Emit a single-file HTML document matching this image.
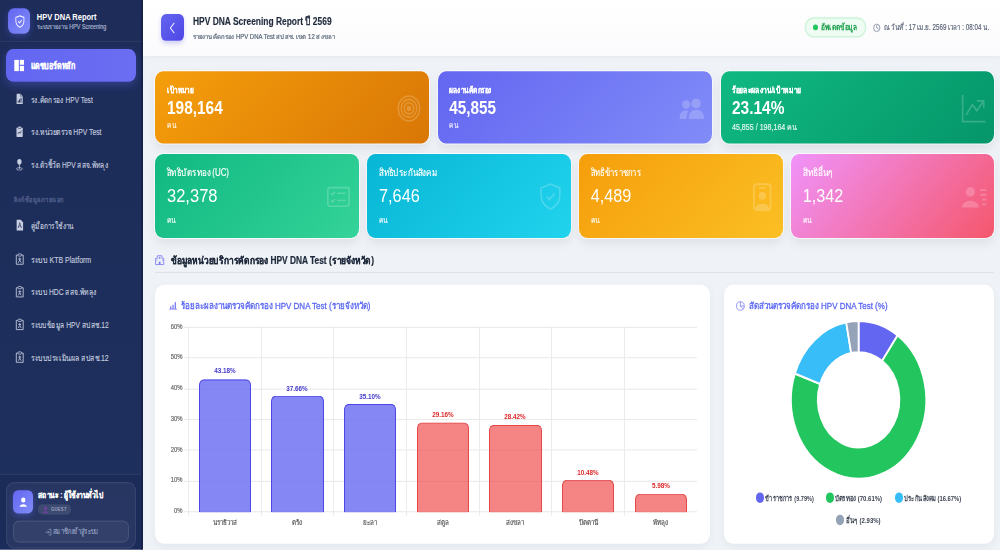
<!DOCTYPE html>
<html><head><meta charset="utf-8"><style>
html,body{margin:0;padding:0;width:1000px;height:550px;overflow:hidden;background:#eff2f7;}
#root{position:absolute;left:0;top:0;width:1000px;height:471.294px;transform:scaleY(1.167);transform-origin:0 0;font-family:'Liberation Sans',sans-serif;}
.t{position:absolute;white-space:nowrap;line-height:1;}
</style></head><body><div id="root">
<div style="position:absolute;left:0.00px;top:0.00px;width:142.00px;height:471.29px;background:linear-gradient(180deg,#1d2c59 0%,#1e305e 100%);"></div>
<div style="position:absolute;left:140.50px;top:0.00px;width:2.00px;height:471.29px;background:#16224a;"></div>
<div style="position:absolute;left:0.00px;top:35.13px;width:140.50px;height:0.86px;background:rgba(255,255,255,0.06);"></div>
<div style="position:absolute;left:8.20px;top:7.28px;width:21.90px;height:21.85px;border-radius:6px;background:linear-gradient(135deg,#6366f1,#818cf8);box-shadow:0 2px 6px rgba(99,102,241,0.35);"></div>
<svg style="position:absolute;left:14.60px;top:13.02px;width:9.80px;height:10.97px;overflow:visible;" viewBox="0 0 16 16" preserveAspectRatio="none"><path d="M8 0.8 C10 1.6 12.2 2.3 14.6 2.6 V7.2 C14.6 11 11.8 13.6 8 15.2 C4.2 13.6 1.4 11 1.4 7.2 V2.6 C3.8 2.3 6 1.6 8 0.8 Z" fill="none" stroke="#fff" stroke-width="1.3" stroke-linejoin="round"/><path d="M5.6 8.1 L7.3 9.7 L10.5 6.4" fill="none" stroke="#fff" stroke-width="1.3" stroke-linecap="round" stroke-linejoin="round"/></svg>
<div style="position:absolute;left:6.20px;top:42.33px;width:129.80px;height:27.34px;border-radius:7px;background:linear-gradient(90deg,#6366f1,#6b6ef2);box-shadow:0 3px 8px rgba(99,102,241,0.35);"></div>
<svg style="position:absolute;left:14.00px;top:51.41px;width:10.30px;height:10.28px;overflow:visible;" viewBox="0 0 16 16" preserveAspectRatio="none"><rect x="0.5" y="0.5" width="7" height="15" fill="#fff"/><rect x="9" y="0.5" width="6.5" height="6.5" fill="#fff"/><rect x="9" y="8.5" width="6.5" height="7" fill="#fff"/></svg>
<svg style="position:absolute;left:15.90px;top:79.78px;width:7.20px;height:9.43px;overflow:visible;" viewBox="0 0 12 16" preserveAspectRatio="none"><path d="M1 0.6 H7.6 L11.2 4.2 V15.4 H1 Z" fill="#c8cfe2"/><path d="M7.6 0.6 V4.2 H11.2" fill="none" stroke="#1e2d5b" stroke-width="0.7"/><rect x="3" y="10.5" width="1.5" height="3" fill="#1e2d5b"/><rect x="5.3" y="8.5" width="1.5" height="5" fill="#1e2d5b"/><rect x="7.6" y="6.5" width="1.5" height="7" fill="#1e2d5b"/></svg>
<svg style="position:absolute;left:15.90px;top:107.88px;width:7.20px;height:9.60px;overflow:visible;" viewBox="0 0 12 16" preserveAspectRatio="none"><rect x="0.8" y="2" width="10.4" height="13.6" rx="1" fill="#c8cfe2"/><rect x="3.5" y="0.4" width="5" height="3.2" rx="0.8" fill="#c8cfe2" stroke="#1e2d5b" stroke-width="0.8"/><path d="M3 11.5 L5 8.5 L7 10.5 L9 6.5" fill="none" stroke="#1e2d5b" stroke-width="1"/></svg>
<svg style="position:absolute;left:15.90px;top:136.08px;width:6.80px;height:9.94px;overflow:visible;" viewBox="0 0 12 16" preserveAspectRatio="none"><circle cx="6" cy="4.3" r="3.9" fill="#c8cfe2"/><rect x="5.35" y="7.5" width="1.3" height="6.5" fill="#c8cfe2"/><ellipse cx="6" cy="14" rx="5.2" ry="1.7" fill="none" stroke="#c8cfe2" stroke-width="1.1"/></svg>
<svg style="position:absolute;left:15.50px;top:188.35px;width:7.60px;height:9.85px;overflow:visible;" viewBox="0 0 12 16" preserveAspectRatio="none"><path d="M1 0.6 H7.6 L11.2 4.2 V15.4 H1 Z" fill="#c8cfe2"/><path d="M6 4.5 C5 7 5 9 3.2 12.2 M6 4.5 C7 7 7 9 8.8 12.2 M3.5 10 C5 9 7 9 8.5 10" fill="none" stroke="#1e2d5b" stroke-width="0.9"/></svg>
<svg style="position:absolute;left:14.70px;top:216.97px;width:9.50px;height:9.94px;overflow:visible;" viewBox="0 0 16 16" preserveAspectRatio="none"><path d="M4.5 2.5 H2.2 V15.2 H13.8 V2.5 H11.5" fill="none" stroke="#c8cfe2" stroke-width="1.3" stroke-linejoin="round"/><rect x="5" y="0.9" width="6" height="3" rx="1" fill="none" stroke="#c8cfe2" stroke-width="1.2"/><path d="M8 6 V9.5 L5.5 13 M8 9.5 L10.5 13 M5.5 8 H10.5" fill="none" stroke="#c8cfe2" stroke-width="1.2"/></svg>
<svg style="position:absolute;left:14.70px;top:244.82px;width:9.50px;height:9.94px;overflow:visible;" viewBox="0 0 16 16" preserveAspectRatio="none"><path d="M4.5 2.5 H2.2 V15.2 H13.8 V2.5 H11.5" fill="none" stroke="#c8cfe2" stroke-width="1.3" stroke-linejoin="round"/><rect x="5" y="0.9" width="6" height="3" rx="1" fill="none" stroke="#c8cfe2" stroke-width="1.2"/><path d="M8 6 V9.5 L5.5 13 M8 9.5 L10.5 13 M5.5 8 H10.5" fill="none" stroke="#c8cfe2" stroke-width="1.2"/></svg>
<svg style="position:absolute;left:14.70px;top:272.92px;width:9.50px;height:9.94px;overflow:visible;" viewBox="0 0 16 16" preserveAspectRatio="none"><path d="M4.5 2.5 H2.2 V15.2 H13.8 V2.5 H11.5" fill="none" stroke="#c8cfe2" stroke-width="1.3" stroke-linejoin="round"/><rect x="5" y="0.9" width="6" height="3" rx="1" fill="none" stroke="#c8cfe2" stroke-width="1.2"/><path d="M8 6 V9.5 L5.5 13 M8 9.5 L10.5 13 M5.5 8 H10.5" fill="none" stroke="#c8cfe2" stroke-width="1.2"/></svg>
<svg style="position:absolute;left:14.70px;top:300.94px;width:9.50px;height:9.94px;overflow:visible;" viewBox="0 0 16 16" preserveAspectRatio="none"><path d="M4.5 2.5 H2.2 V15.2 H13.8 V2.5 H11.5" fill="none" stroke="#c8cfe2" stroke-width="1.3" stroke-linejoin="round"/><rect x="5" y="0.9" width="6" height="3" rx="1" fill="none" stroke="#c8cfe2" stroke-width="1.2"/><path d="M8 6 V9.5 L5.5 13 M8 9.5 L10.5 13 M5.5 8 H10.5" fill="none" stroke="#c8cfe2" stroke-width="1.2"/></svg>
<div style="position:absolute;left:0.00px;top:406.17px;width:140.50px;height:0.86px;background:rgba(255,255,255,0.06);"></div>
<div style="position:absolute;left:0.00px;top:407.03px;width:140.50px;height:64.27px;background:rgba(20,30,70,0.15);"></div>
<div style="position:absolute;left:6.30px;top:413.02px;width:129.40px;height:56.56px;border-radius:8px;background:rgba(255,255,255,0.05);border:1px solid rgba(255,255,255,0.08);box-sizing:border-box;"></div>
<div style="position:absolute;left:13.00px;top:419.88px;width:19.70px;height:20.14px;border-radius:5px;background:linear-gradient(135deg,#6366f1,#818cf8);box-shadow:0 2px 6px rgba(99,102,241,0.4);"></div>
<svg style="position:absolute;left:18.80px;top:425.88px;width:8.50px;height:8.57px;overflow:visible;" viewBox="0 0 16 16" preserveAspectRatio="none"><circle cx="8" cy="4.6" r="4" fill="#fff"/><path d="M1.2 15.5 C1.2 10 14.8 10 14.8 15.5 Z" fill="#fff"/></svg>
<div style="position:absolute;left:38.00px;top:431.88px;width:33.00px;height:9.17px;border-radius:4px;background:rgba(255,255,255,0.1);"></div>
<svg style="position:absolute;left:43.30px;top:433.85px;width:5.00px;height:5.57px;overflow:visible;" viewBox="0 0 16 16" preserveAspectRatio="none"><circle cx="8" cy="4.5" r="4" fill="#7e3aa8"/><path d="M1 16 C1 10 15 10 15 16 Z" fill="#7e3aa8"/></svg>
<div style="position:absolute;left:13.00px;top:446.44px;width:116.00px;height:18.59px;border-radius:6px;background:rgba(255,255,255,0.05);border:1px solid rgba(255,255,255,0.1);box-sizing:border-box;"></div>
<svg style="position:absolute;left:44.70px;top:452.78px;width:6.60px;height:6.00px;overflow:visible;" viewBox="0 0 16 16" preserveAspectRatio="none"><path d="M9 1.5 H14.5 V14.5 H9" fill="none" stroke="#9aa4c4" stroke-width="1.6"/><path d="M1 8 H10.5 M7 4.5 L10.5 8 L7 11.5" fill="none" stroke="#9aa4c4" stroke-width="1.6"/></svg>
<div style="position:absolute;left:142.50px;top:0.00px;width:857.50px;height:47.99px;background:linear-gradient(180deg,#ffffff,#fbfbfd);box-shadow:0 1px 4px rgba(15,23,42,0.06);"></div>
<div style="position:absolute;left:161.00px;top:12.00px;width:23.00px;height:23.14px;border-radius:5px;background:linear-gradient(135deg,#6366f1,#4f46e5);box-shadow:0 2px 4px rgba(79,70,229,0.22);"></div>
<svg style="position:absolute;left:169.30px;top:19.11px;width:6.70px;height:10.03px;overflow:visible;" viewBox="0 0 10 16" preserveAspectRatio="none"><path d="M7.5 1.5 L2 8 L7.5 14.5" fill="none" stroke="#fff" stroke-width="1.5" stroke-linecap="round" stroke-linejoin="round"/></svg>
<div style="position:absolute;left:805.00px;top:15.08px;width:61.00px;height:16.62px;border-radius:10px;background:#effcf3;border:1px solid #c8f3d5;box-sizing:border-box;box-shadow:0 0 2px rgba(34,197,94,0.15);"></div>
<div style="position:absolute;left:813.30px;top:21.25px;width:4.80px;height:4.80px;border-radius:50%;background:#22c55e;"></div>
<svg style="position:absolute;left:873.00px;top:20.14px;width:7.50px;height:7.71px;overflow:visible;" viewBox="0 0 16 16" preserveAspectRatio="none"><circle cx="8" cy="8" r="6.6" fill="none" stroke="#64748b" stroke-width="1.3"/><path d="M8 4 V8.3 L10.8 9.6" fill="none" stroke="#64748b" stroke-width="1.3" stroke-linecap="round"/></svg>
<div style="position:absolute;left:155.00px;top:61.01px;width:274.00px;height:62.21px;border-radius:8px;background:linear-gradient(135deg,#f59e0b,#d97706);box-shadow:0 0 0 0.8px rgba(255,255,255,0.7),0 4px 10px rgba(15,23,42,0.08);"></div>
<div style="position:absolute;left:437.60px;top:61.01px;width:274.40px;height:62.21px;border-radius:8px;background:linear-gradient(135deg,#6366f1,#818cf8);box-shadow:0 0 0 0.8px rgba(255,255,255,0.7),0 4px 10px rgba(15,23,42,0.08);"></div>
<div style="position:absolute;left:720.50px;top:61.01px;width:273.70px;height:62.21px;border-radius:8px;background:linear-gradient(135deg,#10b981,#059669);box-shadow:0 0 0 0.8px rgba(255,255,255,0.7),0 4px 10px rgba(15,23,42,0.08);"></div>
<svg style="position:absolute;left:396.90px;top:81.23px;width:23.90px;height:23.74px;overflow:visible;" viewBox="0 0 16 16" preserveAspectRatio="none"><circle cx="8" cy="8" r="7.2" fill="none" stroke="rgba(255,255,255,0.2)" stroke-width="0.9"/><circle cx="8" cy="8" r="5.2" fill="none" stroke="rgba(255,255,255,0.2)" stroke-width="0.9"/><circle cx="8" cy="8" r="3.2" fill="none" stroke="rgba(255,255,255,0.2)" stroke-width="0.9"/><circle cx="8" cy="8" r="1.5" fill="rgba(255,255,255,0.2)"/></svg>
<svg style="position:absolute;left:679.00px;top:83.98px;width:25.00px;height:17.99px;overflow:visible;" viewBox="0 0 16 13" preserveAspectRatio="none"><circle cx="4.6" cy="4.0" r="2.6" fill="rgba(255,255,255,0.2)"/><circle cx="10.9" cy="3.4" r="3.1" fill="rgba(255,255,255,0.2)"/><path d="M6.3 13 V11.6 C6.3 9 8.5 7.3 11.05 7.3 C13.6 7.3 15.9 9 15.9 11.6 V13 Z" fill="rgba(255,255,255,0.2)"/><path d="M0.45 13 V11.6 C0.45 9.3 2.2 7.7 4.5 7.7 C5.1 7.7 5.6 7.8 6.1 8.0 C5.3 9 4.9 10.2 4.9 11.6 V13 Z" fill="rgba(255,255,255,0.2)"/></svg>
<svg style="position:absolute;left:962.30px;top:81.15px;width:23.70px;height:23.99px;overflow:visible;" viewBox="0 0 16 16" preserveAspectRatio="none"><path d="M0.45 0.3 V15.5 H15.85" fill="none" stroke="rgba(255,255,255,0.2)" stroke-width="1.1"/><path d="M2.77 11.7 L6.96 5.83 L10 9.14 L14.66 3.63 M10 3.63 H14.66 V7.77" fill="none" stroke="rgba(255,255,255,0.2)" stroke-width="1.1"/></svg>
<div style="position:absolute;left:155.30px;top:131.71px;width:203.70px;height:72.66px;border-radius:8px;background:linear-gradient(135deg,#10b981,#34d399);box-shadow:0 0 0 0.8px rgba(255,255,255,0.7),0 4px 10px rgba(15,23,42,0.08);"></div>
<div style="position:absolute;left:366.90px;top:131.71px;width:204.10px;height:72.66px;border-radius:8px;background:linear-gradient(135deg,#06b6d4,#22d3ee);box-shadow:0 0 0 0.8px rgba(255,255,255,0.7),0 4px 10px rgba(15,23,42,0.08);"></div>
<div style="position:absolute;left:579.00px;top:131.71px;width:203.90px;height:72.66px;border-radius:8px;background:linear-gradient(135deg,#f59e0b,#fbbf24);box-shadow:0 0 0 0.8px rgba(255,255,255,0.7),0 4px 10px rgba(15,23,42,0.08);"></div>
<div style="position:absolute;left:790.90px;top:131.71px;width:203.30px;height:72.66px;border-radius:8px;background:linear-gradient(135deg,#f093fb,#f5576c);box-shadow:0 0 0 0.8px rgba(255,255,255,0.7),0 4px 10px rgba(15,23,42,0.08);"></div>
<svg style="position:absolute;left:327.00px;top:160.07px;width:23.00px;height:17.48px;overflow:visible;" viewBox="0 0 16 14" preserveAspectRatio="none"><rect x="0.6" y="0.6" width="14.8" height="12.8" rx="1.5" fill="none" stroke="rgba(255,255,255,0.2)" stroke-width="1.1"/><path d="M2.8 4.5 L3.8 5.5 L5.5 3.5 M2.8 9.5 L3.8 10.5 L5.5 8.5" fill="none" stroke="rgba(255,255,255,0.2)" stroke-width="1.1"/><path d="M7 4.5 H13 M7 9.5 H13" stroke="rgba(255,255,255,0.2)" stroke-width="1.1"/></svg>
<svg style="position:absolute;left:540.00px;top:157.24px;width:21.00px;height:23.14px;overflow:visible;" viewBox="0 0 14 16" preserveAspectRatio="none"><path d="M7 0.6 L13.2 2.8 V7.5 C13.2 11.2 10.5 13.9 7 15.4 C3.5 13.9 0.8 11.2 0.8 7.5 V2.8 Z" fill="none" stroke="rgba(255,255,255,0.2)" stroke-width="1.1"/><path d="M4.5 8 L6.3 9.8 L9.8 6" fill="none" stroke="rgba(255,255,255,0.2)" stroke-width="1.1"/></svg>
<svg style="position:absolute;left:753.00px;top:156.81px;width:18.50px;height:23.82px;overflow:visible;" viewBox="0 0 12 16" preserveAspectRatio="none"><rect x="0.6" y="0.6" width="10.8" height="14.8" rx="1.5" fill="none" stroke="rgba(255,255,255,0.2)" stroke-width="1.1"/><rect x="4" y="2.2" width="4" height="0.9" fill="rgba(255,255,255,0.2)"/><circle cx="6" cy="7.2" r="2.3" fill="rgba(255,255,255,0.2)"/><path d="M1.5 14.8 C1.5 10.8 10.5 10.8 10.5 14.8 Z" fill="rgba(255,255,255,0.2)"/></svg>
<svg style="position:absolute;left:962.00px;top:159.81px;width:24.40px;height:17.74px;overflow:visible;" viewBox="0 0 16 13" preserveAspectRatio="none"><circle cx="5.5" cy="3.3" r="3" fill="rgba(255,255,255,0.2)"/><path d="M0 13 C0 7.5 11 7.5 11 13 Z" fill="rgba(255,255,255,0.2)"/><rect x="12" y="1.5" width="4" height="1.2" fill="rgba(255,255,255,0.2)"/><rect x="12" y="4.5" width="4" height="1.2" fill="rgba(255,255,255,0.2)"/><rect x="13" y="7.5" width="3" height="1.2" fill="rgba(255,255,255,0.2)"/><rect x="13" y="10.5" width="3" height="1.2" fill="rgba(255,255,255,0.2)"/></svg>
<svg style="position:absolute;left:155.20px;top:217.82px;width:9.30px;height:9.08px;overflow:visible;opacity:0.85" viewBox="0 0 16 16" preserveAspectRatio="none"><path d="M1 15.3 V6 H4 V2 H12 V6 H15 V15.3 Z" fill="none" stroke="#6366f1" stroke-width="1.3"/><path d="M8 3.5 V7 M6.3 5.2 H9.7" stroke="#6366f1" stroke-width="1.2"/><rect x="6.5" y="11" width="3" height="4.3" fill="#6366f1"/><rect x="2.5" y="8" width="1.5" height="1.5" fill="#6366f1"/><rect x="12" y="8" width="1.5" height="1.5" fill="#6366f1"/></svg>
<div style="position:absolute;left:155.00px;top:233.08px;width:839.00px;height:0.86px;background:#dde3ec;"></div>
<div style="position:absolute;left:155.30px;top:243.62px;width:554.70px;height:222.88px;border-radius:9px;background:#fff;box-shadow:0 2px 8px rgba(15,23,42,0.05);"></div>
<svg style="position:absolute;left:168.70px;top:257.93px;width:8.30px;height:7.28px;overflow:visible;opacity:0.85" viewBox="0 0 16 16" preserveAspectRatio="none"><path d="M0.5 15.3 H15.5" stroke="#6366f1" stroke-width="1.5"/><rect x="2" y="10" width="2.5" height="5" fill="#6366f1"/><rect x="6.5" y="7" width="2.5" height="8" fill="#6366f1"/><rect x="11" y="2" width="2.5" height="13" fill="#6366f1"/></svg>
<div style="position:absolute;left:184.40px;top:279.86px;width:512.60px;height:0.86px;background:#ebebee;"></div>
<div style="position:absolute;left:184.40px;top:306.24px;width:512.60px;height:0.86px;background:#ebebee;"></div>
<div style="position:absolute;left:184.40px;top:332.62px;width:512.60px;height:0.86px;background:#ebebee;"></div>
<div style="position:absolute;left:184.40px;top:359.00px;width:512.60px;height:0.86px;background:#ebebee;"></div>
<div style="position:absolute;left:184.40px;top:385.38px;width:512.60px;height:0.86px;background:#ebebee;"></div>
<div style="position:absolute;left:184.40px;top:411.75px;width:512.60px;height:0.86px;background:#ebebee;"></div>
<div style="position:absolute;left:184.40px;top:438.13px;width:512.60px;height:0.86px;background:#ebebee;"></div>
<div style="position:absolute;left:188.00px;top:280.29px;width:1.00px;height:162.13px;background:#ebebee;"></div>
<div style="position:absolute;left:260.64px;top:280.29px;width:1.00px;height:162.13px;background:#ebebee;"></div>
<div style="position:absolute;left:333.29px;top:280.29px;width:1.00px;height:162.13px;background:#ebebee;"></div>
<div style="position:absolute;left:405.93px;top:280.29px;width:1.00px;height:162.13px;background:#ebebee;"></div>
<div style="position:absolute;left:478.57px;top:280.29px;width:1.00px;height:162.13px;background:#ebebee;"></div>
<div style="position:absolute;left:551.21px;top:280.29px;width:1.00px;height:162.13px;background:#ebebee;"></div>
<div style="position:absolute;left:623.86px;top:280.29px;width:1.00px;height:162.13px;background:#ebebee;"></div>
<div style="position:absolute;left:198.67px;top:324.66px;width:52.30px;height:113.90px;background:rgba(99,102,241,0.78);border:1.3px solid #4f46e5;border-bottom:none;border-radius:5px 5px 0 0;box-sizing:border-box;"></div>
<div style="position:absolute;left:271.31px;top:339.22px;width:52.30px;height:99.34px;background:rgba(99,102,241,0.78);border:1.3px solid #4f46e5;border-bottom:none;border-radius:5px 5px 0 0;box-sizing:border-box;"></div>
<div style="position:absolute;left:343.96px;top:345.97px;width:52.30px;height:92.59px;background:rgba(99,102,241,0.78);border:1.3px solid #4f46e5;border-bottom:none;border-radius:5px 5px 0 0;box-sizing:border-box;"></div>
<div style="position:absolute;left:416.60px;top:361.64px;width:52.30px;height:76.92px;background:rgba(239,68,68,0.65);border:1.3px solid #e34848;border-bottom:none;border-radius:5px 5px 0 0;box-sizing:border-box;"></div>
<div style="position:absolute;left:489.24px;top:363.59px;width:52.30px;height:74.97px;background:rgba(239,68,68,0.65);border:1.3px solid #e34848;border-bottom:none;border-radius:5px 5px 0 0;box-sizing:border-box;"></div>
<div style="position:absolute;left:561.88px;top:410.92px;width:52.30px;height:27.64px;background:rgba(239,68,68,0.65);border:1.3px solid #e34848;border-bottom:none;border-radius:5px 5px 0 0;box-sizing:border-box;"></div>
<div style="position:absolute;left:634.53px;top:422.79px;width:52.30px;height:15.77px;background:rgba(239,68,68,0.65);border:1.3px solid #e34848;border-bottom:none;border-radius:5px 5px 0 0;box-sizing:border-box;"></div>
<div style="position:absolute;left:724.00px;top:244.22px;width:270.00px;height:221.94px;border-radius:9px;background:#fff;box-shadow:0 2px 8px rgba(15,23,42,0.05);"></div>
<svg style="position:absolute;left:736.20px;top:257.75px;width:8.80px;height:8.40px;overflow:visible;opacity:0.85" viewBox="0 0 16 16" preserveAspectRatio="none"><circle cx="8" cy="8" r="7" fill="none" stroke="#6366f1" stroke-width="1.3"/><path d="M8 1 V8 L13 13 M8 8 H15" fill="none" stroke="#6366f1" stroke-width="1.3"/></svg>
<svg style="position:absolute;left:790.80px;top:274.65px;width:135.20px;height:135.20px;overflow:visible;" viewBox="-67.6 -67.6 135.2 135.2" preserveAspectRatio="none"><path d="M0.000 -67.600 A67.6 67.6 0 0 1 39.009 -55.209 L23.544 -33.321 A40.8 40.8 0 0 0 0.000 -40.800 Z" fill="#6366f1" stroke="#fff" stroke-width="1.8" stroke-linejoin="miter"/><path d="M39.009 -55.209 A67.6 67.6 0 1 1 -63.746 -22.499 L-38.474 -13.579 A40.8 40.8 0 1 0 23.544 -33.321 Z" fill="#22c55e" stroke="#fff" stroke-width="1.8" stroke-linejoin="miter"/><path d="M-63.746 -22.499 A67.6 67.6 0 0 1 -12.375 -66.458 L-7.469 -40.111 A40.8 40.8 0 0 0 -38.474 -13.579 Z" fill="#38bdf8" stroke="#fff" stroke-width="1.8" stroke-linejoin="miter"/><path d="M-12.375 -66.458 A67.6 67.6 0 0 1 -0.000 -67.600 L-0.000 -40.800 A40.8 40.8 0 0 0 -7.469 -40.111 Z" fill="#94a3b8" stroke="#fff" stroke-width="1.8" stroke-linejoin="miter"/></svg>
<div style="position:absolute;left:755.60px;top:422.28px;width:8.30px;height:8.40px;border-radius:50%;background:#6366f1;"></div>
<div style="position:absolute;left:825.80px;top:422.28px;width:8.30px;height:8.40px;border-radius:50%;background:#22c55e;"></div>
<div style="position:absolute;left:894.70px;top:422.28px;width:8.30px;height:8.40px;border-radius:50%;background:#38bdf8;"></div>
<div style="position:absolute;left:836.20px;top:441.22px;width:8.30px;height:8.40px;border-radius:50%;background:#94a3b8;"></div>
<div class="t" style="left:36.80px;top:10.96px;font-size:7.5px;font-weight:700;color:#ffffff;">HPV DNA Report</div>
<div class="t" style="left:36.80px;top:20.79px;font-size:5.4px;font-weight:400;color:#a9b3cf;-webkit-text-stroke:0.15px #a9b3cf;">ระบบรายงาน HPV Screening</div>
<div class="t" style="left:31.40px;top:53.47px;font-size:8.0px;font-weight:700;color:#ffffff;transform:scaleX(0.8980);transform-origin:left top;-webkit-text-stroke:0.1px #ffffff;">แดชบอร์ดหลัก</div>
<div class="t" style="left:31.30px;top:81.83px;font-size:7.6px;font-weight:400;color:#c3cbdf;transform:scaleX(0.8601);transform-origin:left top;-webkit-text-stroke:0.12px #c3cbdf;">รง.คัดกรอง HPV Test</div>
<div class="t" style="left:31.30px;top:109.93px;font-size:7.6px;font-weight:400;color:#c3cbdf;transform:scaleX(0.8954);transform-origin:left top;-webkit-text-stroke:0.12px #c3cbdf;">รง.หน่วยตรวจ HPV Test</div>
<div class="t" style="left:31.30px;top:137.95px;font-size:7.6px;font-weight:400;color:#c3cbdf;transform:scaleX(0.8767);transform-origin:left top;-webkit-text-stroke:0.12px #c3cbdf;">รง.ตัวชี้วัด HPV สสจ.พัทลุง</div>
<div class="t" style="left:13.60px;top:169.38px;font-size:5.6px;font-weight:700;color:#4a5784;letter-spacing:0.6px;transform:scaleX(0.9840);transform-origin:left top;-webkit-text-stroke:0.1px #4a5784;">ลิงก์ข้อมูลภายนอก</div>
<div class="t" style="left:31.30px;top:190.48px;font-size:7.6px;font-weight:400;color:#c3cbdf;transform:scaleX(0.8540);transform-origin:left top;-webkit-text-stroke:0.12px #c3cbdf;">คู่มือการใช้งาน</div>
<div class="t" style="left:31.30px;top:218.93px;font-size:7.6px;font-weight:400;color:#c3cbdf;transform:scaleX(0.9224);transform-origin:left top;-webkit-text-stroke:0.12px #c3cbdf;">ระบบ KTB Platform</div>
<div class="t" style="left:31.30px;top:246.78px;font-size:7.6px;font-weight:400;color:#c3cbdf;transform:scaleX(0.8905);transform-origin:left top;-webkit-text-stroke:0.12px #c3cbdf;">ระบบ HDC สสจ.พัทลุง</div>
<div class="t" style="left:31.30px;top:274.88px;font-size:7.6px;font-weight:400;color:#c3cbdf;transform:scaleX(0.8791);transform-origin:left top;-webkit-text-stroke:0.12px #c3cbdf;">ระบบข้อมูล HPV สปสช.12</div>
<div class="t" style="left:31.30px;top:302.91px;font-size:7.6px;font-weight:400;color:#c3cbdf;transform:scaleX(0.9069);transform-origin:left top;-webkit-text-stroke:0.12px #c3cbdf;">ระบบประเมินผล สปสช.12</div>
<div class="t" style="left:38.20px;top:421.33px;font-size:7.6px;font-weight:700;color:#ffffff;transform:scaleX(0.8814);transform-origin:left top;-webkit-text-stroke:0.1px #ffffff;">สถานะ : ผู้ใช้งานทั่วไป</div>
<div class="t" style="left:51.00px;top:434.33px;font-size:5.2px;font-weight:700;color:#9ca3c0;letter-spacing:0.3px;transform:scaleX(0.8103);transform-origin:left top;">GUEST</div>
<div class="t" style="left:52.70px;top:452.17px;font-size:7.0px;font-weight:400;color:#9aa4c4;transform:scaleX(0.8453);transform-origin:left top;-webkit-text-stroke:0.15px #9aa4c4;">สมาชิกเข้าสู่ระบบ</div>
<div class="t" style="left:193.00px;top:13.12px;font-size:9.8px;font-weight:700;color:#1e293b;transform:scaleX(0.8590);transform-origin:left top;-webkit-text-stroke:0.15px #1e293b;">HPV DNA Screening Report <span style="font-weight:400;-webkit-text-stroke:0.35px #1e293b">ปี</span> 2569</div>
<div class="t" style="left:193.00px;top:28.51px;font-size:5.8px;font-weight:400;color:#5f6b7e;transform:scaleX(1.0312);transform-origin:left top;-webkit-text-stroke:0.2px #5f6b7e;">รายงานคัดกรอง HPV DNA Test สปสช. เขต 12 สงขลา</div>
<div class="t" style="left:821.30px;top:20.13px;font-size:7.4px;font-weight:700;color:#1a9e4b;transform:scaleX(0.8854);transform-origin:left top;-webkit-text-stroke:0;">อัพเดตข้อมูล</div>
<div class="t" style="left:883.60px;top:20.12px;font-size:7.0px;font-weight:400;color:#5b6577;transform:scaleX(0.8924);transform-origin:left top;-webkit-text-stroke:0.15px #5b6577;">ณ วันที่ : 17 เม.ย. 2569 เวลา : 08:04 น.</div>
<div class="t" style="left:166.60px;top:73.94px;font-size:7.4px;font-weight:700;color:#ffffff;transform:scaleX(0.8767);transform-origin:left top;-webkit-text-stroke:0.1px #ffffff;">เป้าหมาย</div>
<div class="t" style="left:166.60px;top:84.73px;font-size:15.3px;font-weight:700;color:#ffffff;transform:scaleX(1.0073);transform-origin:left top;">198,164</div>
<div class="t" style="left:166.60px;top:104.61px;font-size:6.8px;font-weight:400;color:rgba(255,255,255,0.85);transform:scaleX(0.9500);transform-origin:left top;-webkit-text-stroke:0.15px rgba(255,255,255,0.85);">คน</div>
<div class="t" style="left:449.20px;top:73.94px;font-size:7.4px;font-weight:700;color:#ffffff;transform:scaleX(0.8958);transform-origin:left top;-webkit-text-stroke:0.1px #ffffff;">ผลงานคัดกรอง</div>
<div class="t" style="left:449.20px;top:84.73px;font-size:15.3px;font-weight:700;color:#ffffff;">45,855</div>
<div class="t" style="left:449.20px;top:104.61px;font-size:6.8px;font-weight:400;color:rgba(255,255,255,0.85);transform:scaleX(0.9500);transform-origin:left top;-webkit-text-stroke:0.15px rgba(255,255,255,0.85);">คน</div>
<div class="t" style="left:732.10px;top:73.94px;font-size:7.4px;font-weight:700;color:#ffffff;transform:scaleX(0.9192);transform-origin:left top;-webkit-text-stroke:0.1px #ffffff;">ร้อยละผลงาน/เป้าหมาย</div>
<div class="t" style="left:732.10px;top:84.73px;font-size:15.3px;font-weight:700;color:#ffffff;transform:scaleX(1.0117);transform-origin:left top;">23.14%</div>
<div class="t" style="left:732.10px;top:104.61px;font-size:7.0px;font-weight:400;color:rgba(255,255,255,0.85);transform:scaleX(1.0140);transform-origin:left top;-webkit-text-stroke:0.15px rgba(255,255,255,0.85);">45,855 / 198,164 คน</div>
<div class="t" style="left:167.10px;top:143.88px;font-size:8.8px;font-weight:400;color:#ffffff;transform:scaleX(0.8983);transform-origin:left top;-webkit-text-stroke:0.15px #ffffff;">สิทธิบัตรทอง (UC)</div>
<div class="t" style="left:167.10px;top:159.12px;font-size:16.2px;font-weight:400;color:#ffffff;transform:scaleX(1.0199);transform-origin:left top;">32,378</div>
<div class="t" style="left:167.10px;top:185.67px;font-size:6.6px;font-weight:400;color:rgba(255,255,255,0.85);transform:scaleX(1.0333);transform-origin:left top;-webkit-text-stroke:0.15px rgba(255,255,255,0.85);">คน</div>
<div class="t" style="left:378.70px;top:143.88px;font-size:8.8px;font-weight:400;color:#ffffff;transform:scaleX(0.9062);transform-origin:left top;-webkit-text-stroke:0.15px #ffffff;">สิทธิประกันสังคม</div>
<div class="t" style="left:378.70px;top:159.12px;font-size:16.2px;font-weight:400;color:#ffffff;transform:scaleX(1.0070);transform-origin:left top;">7,646</div>
<div class="t" style="left:378.70px;top:185.67px;font-size:6.6px;font-weight:400;color:rgba(255,255,255,0.85);transform:scaleX(1.0333);transform-origin:left top;-webkit-text-stroke:0.15px rgba(255,255,255,0.85);">คน</div>
<div class="t" style="left:590.80px;top:143.88px;font-size:8.8px;font-weight:400;color:#ffffff;transform:scaleX(0.8621);transform-origin:left top;-webkit-text-stroke:0.15px #ffffff;">สิทธิข้าราชการ</div>
<div class="t" style="left:590.80px;top:159.12px;font-size:16.2px;font-weight:400;color:#ffffff;">4,489</div>
<div class="t" style="left:590.80px;top:185.67px;font-size:6.6px;font-weight:400;color:rgba(255,255,255,0.85);transform:scaleX(1.0333);transform-origin:left top;-webkit-text-stroke:0.15px rgba(255,255,255,0.85);">คน</div>
<div class="t" style="left:802.70px;top:143.88px;font-size:8.8px;font-weight:400;color:#ffffff;transform:scaleX(0.9375);transform-origin:left top;-webkit-text-stroke:0.15px #ffffff;">สิทธิอื่นๆ</div>
<div class="t" style="left:802.70px;top:159.12px;font-size:16.2px;font-weight:400;color:#ffffff;">1,342</div>
<div class="t" style="left:802.70px;top:185.67px;font-size:6.6px;font-weight:400;color:rgba(255,255,255,0.85);transform:scaleX(1.0333);transform-origin:left top;-webkit-text-stroke:0.15px rgba(255,255,255,0.85);">คน</div>
<div class="t" style="left:170.50px;top:218.85px;font-size:8.7px;font-weight:700;color:#1e293b;transform:scaleX(0.9619);transform-origin:left top;-webkit-text-stroke:0.2px #1e293b;">ข้อมูลหน่วยบริการคัดกรอง HPV DNA Test (รายจังหวัด)</div>
<div class="t" style="left:180.70px;top:258.86px;font-size:8.0px;font-weight:400;color:#5a67f2;-webkit-text-stroke:0.25px #5a67f2;">ร้อยละผลงานตรวจคัดกรอง HPV DNA Test (รายจังหวัด)</div>
<div class="t" style="left:-817.50px;width:1000px;text-align:right;top:277.52px;font-size:5.9px;font-weight:400;color:#666666;-webkit-text-stroke:0.15px #666;">60%</div>
<div class="t" style="left:-817.50px;width:1000px;text-align:right;top:303.90px;font-size:5.9px;font-weight:400;color:#666666;-webkit-text-stroke:0.15px #666;">50%</div>
<div class="t" style="left:-817.50px;width:1000px;text-align:right;top:330.28px;font-size:5.9px;font-weight:400;color:#666666;-webkit-text-stroke:0.15px #666;">40%</div>
<div class="t" style="left:-817.50px;width:1000px;text-align:right;top:356.66px;font-size:5.9px;font-weight:400;color:#666666;-webkit-text-stroke:0.15px #666;">30%</div>
<div class="t" style="left:-817.50px;width:1000px;text-align:right;top:383.04px;font-size:5.9px;font-weight:400;color:#666666;-webkit-text-stroke:0.15px #666;">20%</div>
<div class="t" style="left:-817.50px;width:1000px;text-align:right;top:409.41px;font-size:5.9px;font-weight:400;color:#666666;-webkit-text-stroke:0.15px #666;">10%</div>
<div class="t" style="left:-817.50px;width:1000px;text-align:right;top:435.79px;font-size:5.9px;font-weight:400;color:#666666;-webkit-text-stroke:0.15px #666;">0%</div>
<div class="t" style="left:-275.18px;width:1000px;text-align:center;top:316.32px;font-size:5.6px;font-weight:700;color:#4338ca;transform:scaleX(1.13);transform-origin:center top;">43.18%</div>
<div class="t" style="left:-275.18px;width:1000px;text-align:center;top:444.79px;font-size:6.2px;font-weight:400;color:#555555;-webkit-text-stroke:0.15px #555555;">นราธิวาส</div>
<div class="t" style="left:-202.54px;width:1000px;text-align:center;top:330.88px;font-size:5.6px;font-weight:700;color:#4338ca;transform:scaleX(1.13);transform-origin:center top;">37.66%</div>
<div class="t" style="left:-202.54px;width:1000px;text-align:center;top:444.79px;font-size:6.2px;font-weight:400;color:#555555;-webkit-text-stroke:0.15px #555555;">ตรัง</div>
<div class="t" style="left:-129.89px;width:1000px;text-align:center;top:337.63px;font-size:5.6px;font-weight:700;color:#4338ca;transform:scaleX(1.13);transform-origin:center top;">35.10%</div>
<div class="t" style="left:-129.89px;width:1000px;text-align:center;top:444.79px;font-size:6.2px;font-weight:400;color:#555555;-webkit-text-stroke:0.15px #555555;">ยะลา</div>
<div class="t" style="left:-57.25px;width:1000px;text-align:center;top:353.30px;font-size:5.6px;font-weight:700;color:#dc2626;transform:scaleX(1.13);transform-origin:center top;">29.16%</div>
<div class="t" style="left:-57.25px;width:1000px;text-align:center;top:444.79px;font-size:6.2px;font-weight:400;color:#555555;-webkit-text-stroke:0.15px #555555;">สตูล</div>
<div class="t" style="left:15.39px;width:1000px;text-align:center;top:355.25px;font-size:5.6px;font-weight:700;color:#dc2626;transform:scaleX(1.13);transform-origin:center top;">28.42%</div>
<div class="t" style="left:15.39px;width:1000px;text-align:center;top:444.79px;font-size:6.2px;font-weight:400;color:#555555;-webkit-text-stroke:0.15px #555555;">สงขลา</div>
<div class="t" style="left:88.04px;width:1000px;text-align:center;top:402.58px;font-size:5.6px;font-weight:700;color:#dc2626;transform:scaleX(1.13);transform-origin:center top;">10.48%</div>
<div class="t" style="left:88.04px;width:1000px;text-align:center;top:444.79px;font-size:6.2px;font-weight:400;color:#555555;-webkit-text-stroke:0.15px #555555;">ปัตตานี</div>
<div class="t" style="left:160.68px;width:1000px;text-align:center;top:414.45px;font-size:5.6px;font-weight:700;color:#dc2626;transform:scaleX(1.13);transform-origin:center top;">5.98%</div>
<div class="t" style="left:160.68px;width:1000px;text-align:center;top:444.79px;font-size:6.2px;font-weight:400;color:#555555;-webkit-text-stroke:0.15px #555555;">พัทลุง</div>
<div class="t" style="left:748.80px;top:258.52px;font-size:8.0px;font-weight:400;color:#5a67f2;-webkit-text-stroke:0.25px #5a67f2;">สัดส่วนตรวจคัดกรอง HPV DNA Test (%)</div>
<div class="t" style="left:765.20px;top:423.63px;font-size:6.6px;font-weight:700;color:#3a4150;transform:scaleX(0.8425);transform-origin:left top;-webkit-text-stroke:0;">ข้าราชการ (9.79%)</div>
<div class="t" style="left:835.40px;top:423.63px;font-size:6.6px;font-weight:700;color:#3a4150;transform:scaleX(0.9129);transform-origin:left top;-webkit-text-stroke:0;">บัตรทอง (70.61%)</div>
<div class="t" style="left:903.80px;top:423.63px;font-size:6.6px;font-weight:700;color:#3a4150;transform:scaleX(0.8855);transform-origin:left top;-webkit-text-stroke:0;">ประกันสังคม (16.67%)</div>
<div class="t" style="left:845.80px;top:442.57px;font-size:6.6px;font-weight:700;color:#3a4150;transform:scaleX(0.9124);transform-origin:left top;-webkit-text-stroke:0;">อื่นๆ (2.93%)</div>
</div></body></html>
